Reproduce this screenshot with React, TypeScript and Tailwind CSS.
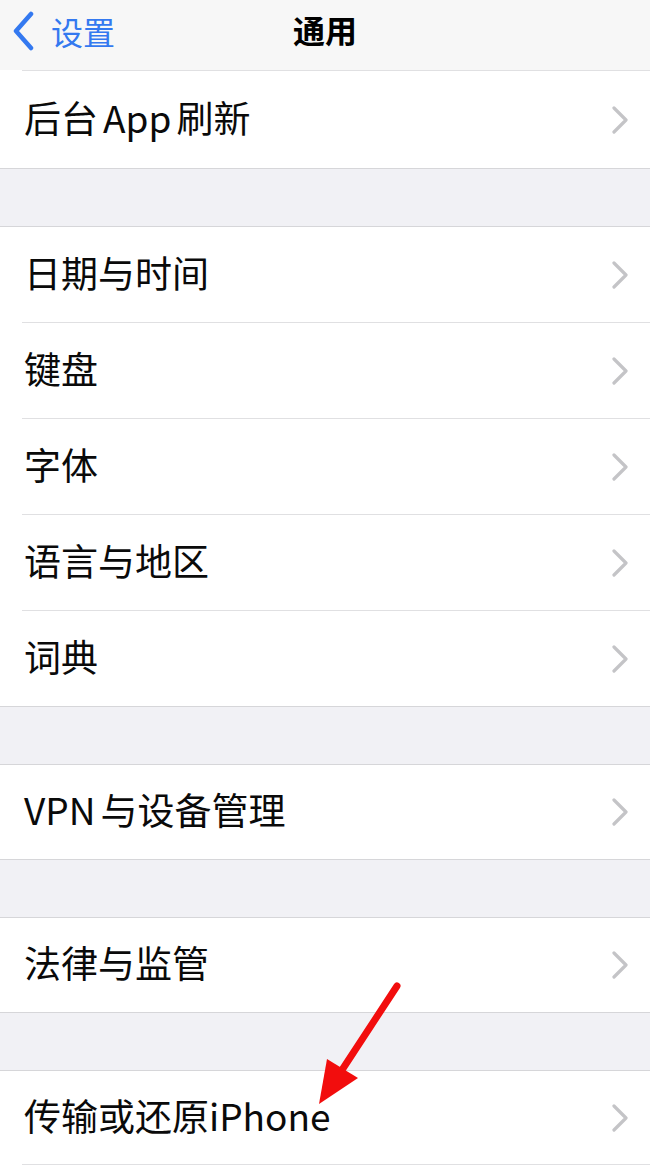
import React from "react";

const font = { fontFamily: '"Noto Sans CJK SC", "Noto Sans", sans-serif' };

function Chevron() {
  return (
    <svg width="18" height="28" viewBox="0 0 18 28" className="shrink-0">
      <path d="M3 2 L15 14 L3 26" fill="none" stroke="#c4c4c7" strokeWidth="3.2" strokeLinecap="round" strokeLinejoin="round" />
    </svg>
  );
}

// splits latin and CJK runs with a small gap, like iOS does
function Label({ parts, gap = "ml-[5px]" }: { parts: string[]; gap?: string }) {
  return (
    <span className="flex items-center text-[37px] leading-none text-[#0a0a0a]">
      {parts.map((p, i) => (
        <span key={i} className={i > 0 ? gap : ""}>
          {p}
        </span>
      ))}
    </span>
  );
}

function Row({ parts, h = "h-[95px]", gap }: { parts: string[]; h?: string; gap?: string }) {
  return (
    <div className={`flex items-center justify-between bg-white pb-[5px] pl-[24px] pr-[21px] ${h}`}>
      <Label parts={parts} gap={gap} />
      <div className="pt-[5px]">
        <Chevron />
      </div>
    </div>
  );
}

const Inset = () => (
  <div className="bg-white">
    <div className="ml-[22px] h-px bg-[#e0e0e2]" />
  </div>
);
const Line = () => <div className="h-px bg-[#d6d6d9]" />;
const Gap = () => <div className="h-[57px] bg-[#f1f1f5]" />;

export default function App() {
  return (
    <div className="relative w-[650px] h-[1172px] overflow-hidden bg-white" style={font}>
      {/* nav bar */}
      <div className="relative flex h-[70px] items-center bg-[#f7f7f7] pb-[9px]">
        <div className="flex items-center pl-[11px]">
          <svg width="24" height="40" viewBox="0 0 24 40">
            <path d="M20 3 L5 20 L20 37" fill="none" stroke="#3479f0" strokeWidth="4.5" strokeLinecap="round" strokeLinejoin="round" />
          </svg>
          <span className="ml-[16px] text-[32px] leading-none text-[#3479f0]">设置</span>
        </div>
        <span className="absolute left-1/2 top-[13px] -translate-x-1/2 text-[32px] font-bold leading-none text-black">通用</span>
      </div>
      <Inset />
      <Row parts={["后台", "App", "刷新"]} h="h-[97px]" />
      <Line />
      <Gap />
      <Line />
      <Row parts={["日期与时间"]} />
      <Inset />
      <Row parts={["键盘"]} />
      <Inset />
      <Row parts={["字体"]} />
      <Inset />
      <Row parts={["语言与地区"]} />
      <Inset />
      <Row parts={["词典"]} />
      <Line />
      <Gap />
      <Line />
      <Row parts={["VPN", "与设备管理"]} h="h-[94px]" />
      <Line />
      <Gap />
      <Line />
      <Row parts={["法律与监管"]} h="h-[94px]" />
      <Line />
      <Gap />
      <Line />
      <Row parts={["传输或还原", "iPhone"]} h="h-[93px]" gap="ml-0" />
      <Inset />
      <div className="h-[8px] bg-white" />

      {/* red annotation arrow */}
      <svg className="absolute left-0 top-0 pointer-events-none" width="650" height="1172">
        <line x1="397" y1="986" x2="342" y2="1070" stroke="#f20d0d" strokeWidth="7" strokeLinecap="round" />
        <polygon points="319,1104 327,1059 358,1078" fill="#f20d0d" />
      </svg>
    </div>
  );
}
